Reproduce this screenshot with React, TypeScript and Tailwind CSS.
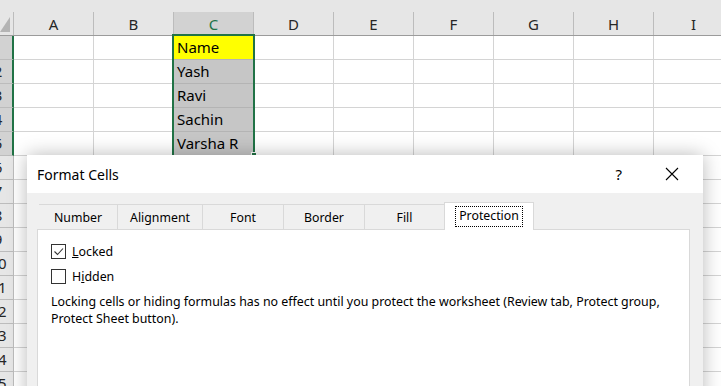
import React from "react";

const COLS = ["A", "B", "C", "D", "E", "F", "G", "H", "I"];
const ROWS = Array.from({ length: 15 }, (_, i) => i + 1);
const CELLS: Record<number, string> = { 1: "Name", 2: "Yash", 3: "Ravi", 4: "Sachin", 5: "Varsha R" };

const ui = { fontFamily: '"Noto Sans", "Open Sans", sans-serif' };

function Checkbox({ checked }: { checked: boolean }) {
  return (
    <svg width="15" height="15" viewBox="0 0 15 15" className="shrink-0">
      <rect x="0.5" y="0.5" width="14" height="14" fill="#fff" stroke="#333" />
      {checked && <polyline points="3.5,7.5 6.5,10.5 12,4.5" fill="none" stroke="#333" strokeWidth="1.1" />}
    </svg>
  );
}

function Sheet() {
  return (
    <div className="flex flex-col">
      {/* column header */}
      <div className="flex h-[36px] bg-[#e6e6e6] border-b border-[#9b9b9b]">
        <div className="w-[14px] shrink-0 flex flex-col">
          <div className="h-[12px]" />
          <div className="flex-1 border-r border-[#bcbcbc]">
            <svg width="13" height="23" viewBox="0 0 13 23">
              <polygon points="0,20 10,20 10,5" fill="#b4b4b4" />
            </svg>
          </div>
        </div>
        {COLS.map((c) => (
          <div key={c} className="w-[80px] shrink-0 flex flex-col">
            <div className="h-[12px]" />
            <div
              className={`flex-1 border-r border-[#bcbcbc] flex items-center justify-center pt-[1px] text-[15px] ${
                c === "C" ? "bg-[#d2d2d2] text-[#217346]" : "text-[#262626]"
              }`}
            >
              {c}
            </div>
          </div>
        ))}
      </div>
      {ROWS.map((r) => {
        const sel = r <= 5;
        return (
          <div key={r} className="flex h-[24px]">
            <div
              className={`w-[14px] shrink-0 overflow-hidden border-b border-[#bcbcbc] ${
                sel ? "bg-[#d2d2d2] border-r-2 border-r-[#217346]" : "bg-[#e6e6e6] border-r border-r-[#bcbcbc]"
              }`}
            >
              <div className="w-[30px] -ml-[17px] text-center text-[15px] leading-[23px] text-[#262626]">{r}</div>
            </div>
            {COLS.map((c) => {
              const isC = c === "C" && sel;
              const bg = isC ? (r === 1 ? "bg-[#ffff00]" : "bg-[#c6c6c6]") : "bg-white";
              return (
                <div
                  key={c}
                  className={`w-[80px] shrink-0 border-r border-b ${
                    isC ? "border-[#b4b4b4]" : "border-[#d4d4d4]"
                  } ${bg} px-[3px] text-[15px] leading-[23px] text-black whitespace-nowrap`}
                >
                  {isC ? CELLS[r] : ""}
                </div>
              );
            })}
          </div>
        );
      })}
    </div>
  );
}

function Dialog() {
  const tabs = [
    { label: "Number", w: "w-[79px]" },
    { label: "Alignment", w: "w-[85px]" },
    { label: "Font", w: "w-[81px]" },
    { label: "Border", w: "w-[81px]" },
    { label: "Fill", w: "w-[80px]" },
  ];
  return (
    <div
      className="absolute left-[27px] top-[155px] w-[676px] h-[260px] bg-[#f0f0f0] shadow-[0_0_18px_rgba(0,0,0,0.28)] flex flex-col text-black"
      style={ui}
    >
      <div className="h-[38px] bg-white flex items-center pl-[10px]">
        <span className="text-[14px]">Format Cells</span>
        <span className="ml-auto text-[15px] mr-[43px]">?</span>
        <svg width="14" height="14" viewBox="0 0 14 14" className="mr-[24px]">
          <path d="M1 1 L13 13 M13 1 L1 13" stroke="#000" strokeWidth="1.1" />
        </svg>
      </div>
      <div className="flex-1 flex flex-col pl-[10px] pr-[13px] pt-[9px]">
        <div className="flex items-end h-[27px]">
          <div className="w-[2px]" />
          {tabs.map((t) => (
            <div
              key={t.label}
              className={`${t.w} h-[25px] border-t border-r border-[#d9d9d9] flex items-center justify-center pt-[3px] text-[12.3px]`}
            >
              {t.label}
            </div>
          ))}
          <div className="w-[90px] h-[28px] -mb-px -ml-px relative z-10 bg-white border border-b-0 border-[#d9d9d9] flex items-center justify-center">
            <span className="border border-dotted border-black px-[3px] h-[21px] flex items-center text-[12.3px]">
              Protection
            </span>
          </div>
        </div>
        <div className="flex-1 bg-white border border-[#d9d9d9] pl-[13px] pt-[14px] text-[12.4px]">
          <div className="flex items-center gap-[6px] h-[15px]">
            <Checkbox checked />
            <span className="pt-[2px]">
              <span className="underline">L</span>ocked
            </span>
          </div>
          <div className="flex items-center gap-[6px] h-[15px] mt-[10px]">
            <Checkbox checked={false} />
            <span className="pt-[2px]">
              H<span className="underline">i</span>dden
            </span>
          </div>
          <p className="mt-[9px] leading-[17px]">
            Locking cells or hiding formulas has no effect until you protect the worksheet (Review tab, Protect group,
            <br />
            Protect Sheet button).
          </p>
        </div>
      </div>
    </div>
  );
}

export default function App() {
  return (
    <div className="relative w-[721px] h-[386px] overflow-hidden bg-white" style={ui}>
      <Sheet />
      {/* selection border over C1:C5 */}
      <div className="absolute left-[172px] top-[34px] w-[83px] h-[123px] border-2 border-[#217346] pointer-events-none" />
      <div className="absolute left-[251px] top-[152px] w-[6px] h-[5px] bg-[#217346] border border-white" />
      <Dialog />
    </div>
  );
}
